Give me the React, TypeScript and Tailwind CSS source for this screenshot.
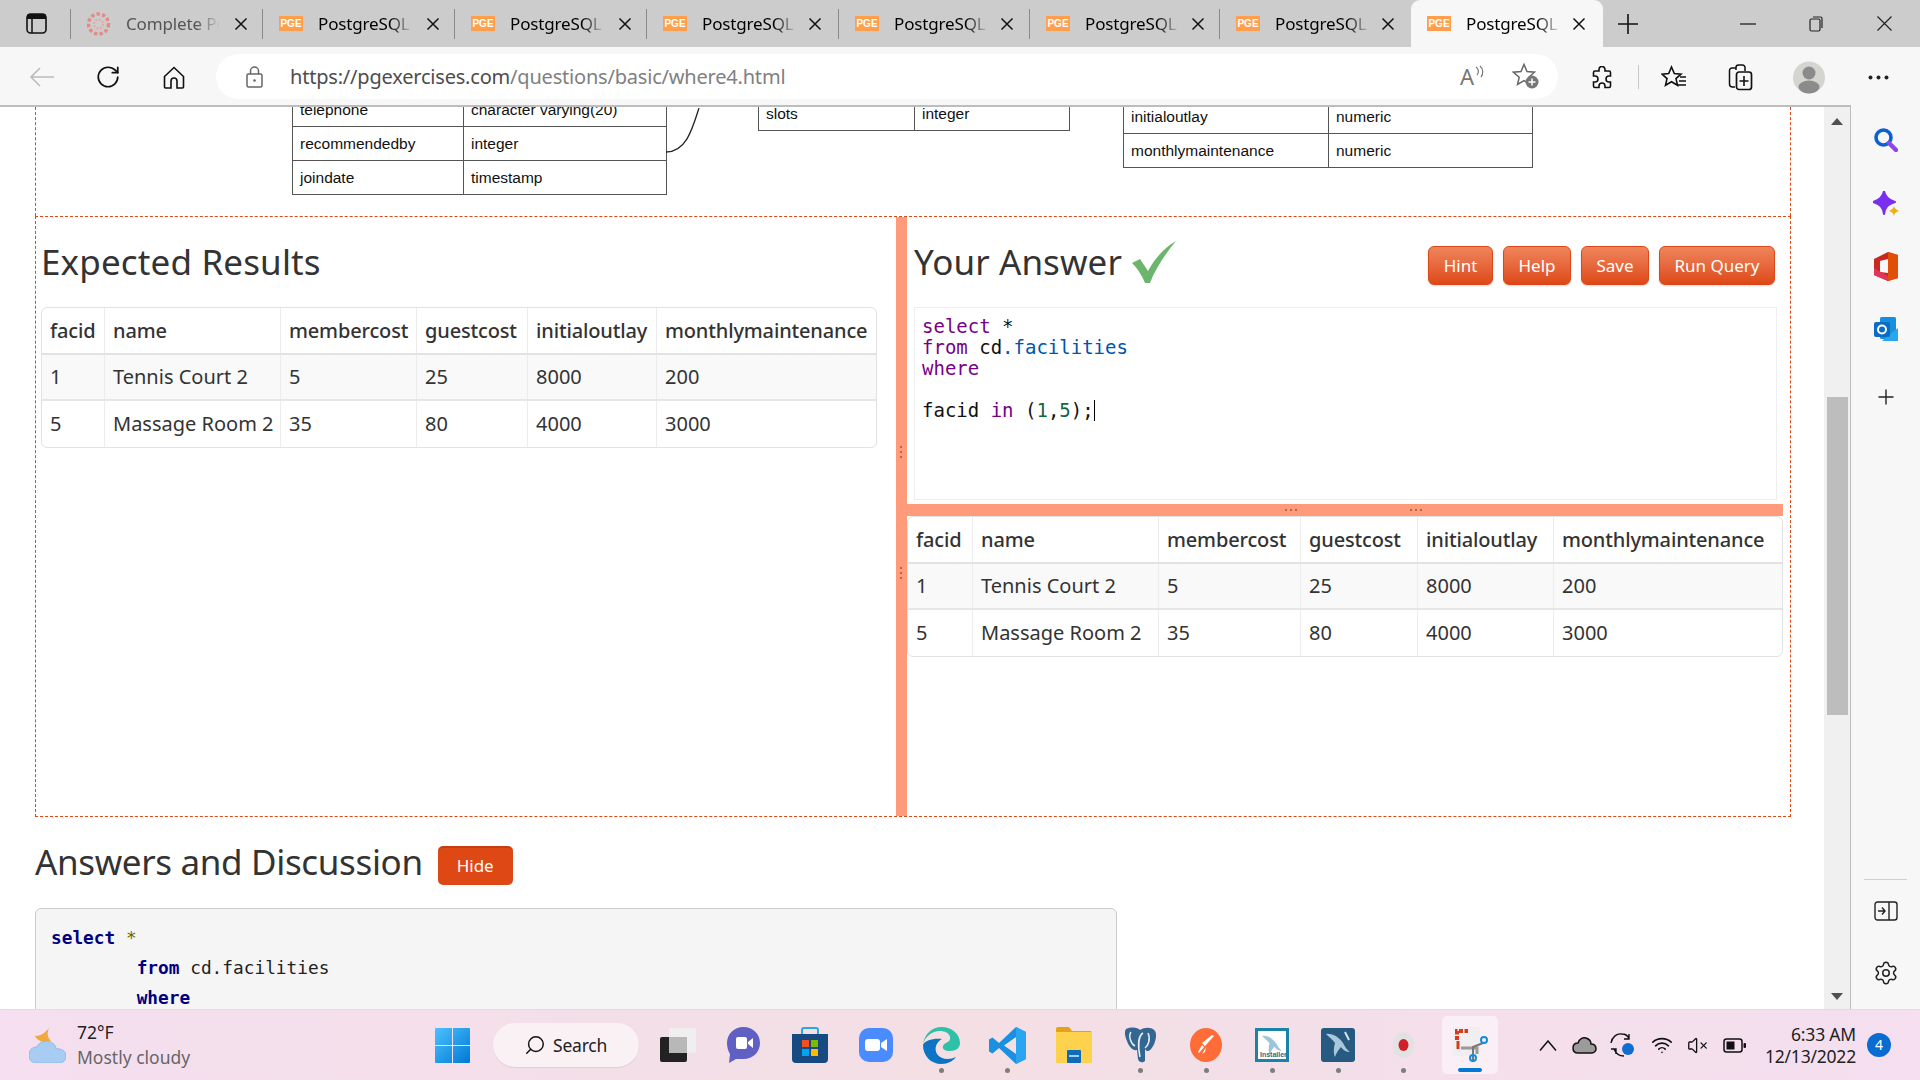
import React from "react";
import { RotateCw, Plus, Settings, Wifi, VolumeX, Search } from "lucide-react";

const UB = "font-['Noto_Sans','Open_Sans',sans-serif]";

function CloseX() {
  return (
    <svg width="14" height="14" viewBox="0 0 14 14" className="shrink-0">
      <path d="M1.5 1.5 12.5 12.5M12.5 1.5 1.5 12.5" stroke="#111" strokeWidth="1.5" fill="none" />
    </svg>
  );
}

function Pge() {
  return (
    <span className="w-[24px] h-[15px] shrink-0 bg-[#ff9f4d] text-white text-[10px] leading-[15px] font-bold text-center font-['Liberation_Sans',sans-serif]">
      PGE
    </span>
  );
}

function Tab({ w, active, divider, closeMl }: { w: string; active?: boolean; divider?: boolean; closeMl: string }) {
  return (
    <div className={`${w} h-full flex items-center pl-[16px] shrink-0 ${active ? "bg-[#f7f7f7] rounded-t-[9px]" : ""}`}>
      <Pge />
      <span className="ml-[15px] w-[92px] overflow-hidden whitespace-nowrap text-[17px] text-black font-['Noto_Sans',sans-serif] tracking-[-0.15px] [mask-image:linear-gradient(90deg,#000_78%,rgba(0,0,0,0.2)_98%)]">
        PostgreSQL
      </span>
      <span className={closeMl}><CloseX /></span>
      {divider ? <span className="ml-auto w-px h-[30px] bg-[#8a8a8a]" /> : null}
    </div>
  );
}

function TabStrip() {
  return (
    <div className="h-[47px] bg-[#cccccc] flex items-center relative shrink-0">
      <div className="w-[70px] h-full flex items-center pl-[26px]">
        <svg width="21" height="21" viewBox="0 0 21 21">
          <rect x="1" y="1" width="19" height="19" rx="3.5" fill="none" stroke="#111" strokeWidth="1.6" />
          <path d="M1 2.5 A1.5 1.5 0 0 1 2.5 1H18.5A1.5 1.5 0 0 1 20 2.5V6H1Z" fill="#111" />
          <path d="M6 6V20" stroke="#111" strokeWidth="1.5" />
        </svg>
      </div>
      <span className="w-px h-[30px] bg-[#8a8a8a]" />
      <div className="w-[192px] h-full flex items-center pl-[15px] shrink-0">
        <svg width="25" height="24" viewBox="0 0 25 24" className="shrink-0">
          <g fill="none" stroke="#e48a86" strokeWidth="3.4" strokeDasharray="3.4 2.2">
            <circle cx="12.5" cy="12" r="10" />
          </g>
          <circle cx="12.5" cy="12" r="4.5" fill="none" stroke="#e9a5a0" strokeWidth="2" strokeDasharray="2 1.5" />
        </svg>
        <span className="ml-[15px] w-[94px] overflow-hidden whitespace-nowrap text-[17px] text-[#555] font-['Noto_Sans',sans-serif] tracking-[-0.15px] [mask-image:linear-gradient(90deg,#000_75%,transparent_100%)]">
          Complete Postgre
        </span>
        <span className="ml-[14px]"><CloseX /></span>
        <span className="ml-auto w-px h-[30px] bg-[#8a8a8a]" />
      </div>
      <Tab w="w-[192px]" closeMl="ml-[16px]" divider />
      <Tab w="w-[192px]" closeMl="ml-[16px]" divider />
      <Tab w="w-[192px]" closeMl="ml-[14px]" divider />
      <Tab w="w-[191px]" closeMl="ml-[14px]" divider />
      <Tab w="w-[190px]" closeMl="ml-[14px]" divider />
      <Tab w="w-[191px]" closeMl="ml-[14px]" />
      <Tab w="w-[192px]" closeMl="ml-[14px]" active />
      <svg width="20" height="20" viewBox="0 0 20 20" className="ml-[15px] shrink-0">
        <path d="M10 0V20M0 10H20" stroke="#111" strokeWidth="1.6" />
      </svg>
      <svg width="16" height="2" viewBox="0 0 16 2" className="ml-[102px] shrink-0">
        <path d="M0 1H16" stroke="#222" strokeWidth="1.3" />
      </svg>
      <svg width="14" height="16" viewBox="0 0 14 16" className="ml-[53px] shrink-0">
        <rect x="1" y="3" width="10" height="12" rx="1.5" fill="none" stroke="#222" strokeWidth="1.2" />
        <path d="M4 1H11.5A1.5 1.5 0 0 1 13 2.5V12" fill="none" stroke="#222" strokeWidth="1.2" />
      </svg>
      <svg width="15" height="15" viewBox="0 0 15 15" className="ml-[54px] shrink-0">
        <path d="M.5.5 14.5 14.5M14.5.5.5 14.5" stroke="#222" strokeWidth="1.2" />
      </svg>
    </div>
  );
}

function Toolbar() {
  return (
    <div className="h-[58px] bg-[#f7f7f7] flex items-center shrink-0">
      <svg width="26" height="22" viewBox="0 0 26 22" className="ml-[29px] mt-[2px] shrink-0">
        <path d="M25 11H2M11 2 2 11l9 9" fill="none" stroke="#bcbcbc" strokeWidth="1.6" />
      </svg>
      <RotateCw size={26} strokeWidth={1.6} className="ml-[40px] mt-[2px] shrink-0 text-[#111]" />
      <svg width="22" height="23" viewBox="0 0 22 23" className="ml-[42px] mt-[2px] shrink-0">
        <path d="M1.5 10.5 11 1.5l9.5 9V21a1 1 0 0 1-1 1H14v-7a3 3 0 0 0-6 0v7H2.5a1 1 0 0 1-1-1Z" fill="none" stroke="#111" strokeWidth="1.6" />
      </svg>
      <div className="ml-[31px] w-[1342px] h-[45px] bg-white rounded-full flex items-center shrink-0">
        <svg width="17" height="22" viewBox="0 0 17 22" className="ml-[30px] mt-[1px] shrink-0">
          <rect x="1" y="8" width="15" height="13" rx="1.5" fill="none" stroke="#666" strokeWidth="1.5" />
          <path d="M4.5 8V5a4 4 0 0 1 8 0v3" fill="none" stroke="#666" strokeWidth="1.5" />
          <circle cx="8.5" cy="14.5" r="1.3" fill="#666" />
        </svg>
        <span className="ml-[27px] mt-[1px] text-[20px] font-['Noto_Sans',sans-serif] tracking-[-0.2px] whitespace-nowrap">
          <span className="text-[#4d4d4d]">https://pgexercises.com</span>
          <span className="text-[#808080]">/questions/basic/where4.html</span>
        </span>
        <span className="ml-auto relative w-[25px] h-[22px] shrink-0">
          <span className="absolute left-0 bottom-0 text-[22px] leading-[22px] text-[#777] font-['Noto_Sans',sans-serif]">A</span>
          <svg width="10" height="14" viewBox="0 0 10 14" className="absolute right-0 top-0">
            <path d="M1 2c3 2 3 6 1 8M5 1c3.500 3 3.500 8 1 11" fill="none" stroke="#777" strokeWidth="1.2" />
          </svg>
        </span>
        <svg width="28" height="28" viewBox="0 0 28 28" className="ml-[27px] mr-[18px] shrink-0">
          <path d="M12 2.500 15 9.500l7.500.7-5.700 5 1.700 7.300L12 18.700 5.500 22.500 7.200 15.200 1.500 10.200 9 9.500Z" fill="none" stroke="#666" strokeWidth="1.5" />
          <circle cx="20" cy="20" r="6.500" fill="#777" />
          <path d="M20 16.500v7M16.500 20h7" stroke="#fff" strokeWidth="1.5" />
        </svg>
      </div>
      <svg width="22" height="23" viewBox="0 0 22 23" className="ml-[33px] mt-[2px] shrink-0">
        <path d="M8 3.500a3 3 0 0 1 6 0V5h4a1.500 1.500 0 0 1 1.500 1.500V10h-1.500a3 3 0 0 0 0 6h1.500v4a1.500 1.500 0 0 1-1.500 1.500H14V20a3 3 0 0 0-6 0v1.500H4A1.500 1.500 0 0 1 2.500 20V16H4a3 3 0 0 0 0-6H2.500V6.500A1.500 1.500 0 0 1 4 5h4Z" fill="none" stroke="#111" strokeWidth="1.6" />
      </svg>
      <span className="ml-[25px] mt-[2px] w-px h-[24px] bg-[#c8c8c8] shrink-0" />
      <svg width="26" height="24" viewBox="0 0 26 24" className="ml-[22px] mt-[2px] shrink-0">
        <path d="M10.500 2 13.300 8.500l6.700.6-5 4.500 1.500 6.700-6-3.600-6 3.600 1.500-6.700-5-4.500 6.700-.6Z" fill="none" stroke="#111" strokeWidth="1.6" />
        <path d="M19 12h6M18 16h7M17 20h8" stroke="#111" strokeWidth="1.5" />
      </svg>
      <svg width="25" height="27" viewBox="0 0 25 27" className="ml-[41px] mt-[2px] shrink-0">
        <path d="M8 6V3.500A2.500 2.500 0 0 1 10.500 1h4A2.500 2.500 0 0 1 17 3.500V7M7 23H4.500A3 3 0 0 1 1.500 20V6.500A2.500 2.500 0 0 1 4 4h4" fill="none" stroke="#111" strokeWidth="1.5" />
        <rect x="8.500" y="8" width="15" height="17.500" rx="2.500" fill="none" stroke="#111" strokeWidth="1.7" />
        <path d="M16 12v10M11.500 17h9" stroke="#111" strokeWidth="1.6" />
      </svg>
      <svg width="32" height="33" viewBox="0 0 32 33" className="ml-[40px] mt-[2px] shrink-0">
        <circle cx="16" cy="16.500" r="16" fill="#d4d4d0" />
        <circle cx="16" cy="12" r="6.500" fill="#8b8b8b" />
        <ellipse cx="16" cy="26" rx="10.500" ry="6.500" fill="#8b8b8b" />
      </svg>
      <svg width="21" height="5" viewBox="0 0 21 5" className="ml-[43px] mt-[2px] shrink-0">
        <circle cx="2.500" cy="2.500" r="2" fill="#222" />
        <circle cx="10.500" cy="2.500" r="2" fill="#222" />
        <circle cx="18.500" cy="2.500" r="2" fill="#222" />
      </svg>
    </div>
  );
}

function DiagramTable({ pos, col, rows }: { pos: string; col: string; rows: string[][] }) {
  return (
    <div className={`absolute ${pos} border-x border-[#555] font-['Liberation_Sans',sans-serif] text-[15.5px] text-[#111]`}>
      {rows.map((r, i) => (
        <div key={i} className="flex h-[34px] border-b border-[#555] box-border">
          <div className={`${col} h-full border-r border-[#555] pl-[7px] flex items-center shrink-0`}>{r[0]}</div>
          <div className="flex-1 pl-[7px] flex items-center">{r[1]}</div>
        </div>
      ))}
    </div>
  );
}

function Schema() {
  return (
    <div className="h-[109px] ml-[35px] w-[1756px] border-x border-dashed border-[#dd4814] relative overflow-hidden shrink-0">
      <DiagramTable
        pos="left-[256px] top-[-14px] w-[375px]"
        col="w-[171px]"
        rows={[
          ["telephone", "character varying(20)"],
          ["recommendedby", "integer"],
          ["joindate", "timestamp"],
        ]}
      />
      <svg width="40" height="50" viewBox="0 0 40 50" className="absolute left-[630px] top-[1px]">
        <path d="M0 44C20 44 26 22 33 0" fill="none" stroke="#222" strokeWidth="1.3" />
      </svg>
      <DiagramTable pos="left-[722px] top-[-10px] w-[312px]" col="w-[156px]" rows={[["slots", "integer"]]} />
      <DiagramTable
        pos="left-[1087px] top-[-7px] w-[410px]"
        col="w-[205px]"
        rows={[
          ["initialoutlay", "numeric"],
          ["monthlymaintenance", "numeric"],
        ]}
      />
    </div>
  );
}

const HEAD = ["facid", "name", "membercost", "guestcost", "initialoutlay", "monthlymaintenance"];
const ROWS = [
  ["1", "Tennis Court 2", "5", "25", "8000", "200"],
  ["5", "Massage Room 2", "35", "80", "4000", "3000"],
];

function DataTable({ cols, className }: { cols: string[]; className: string }) {
  return (
    <div className={`${className} border border-[#e2e2e2] rounded-[6px] overflow-hidden ${UB} text-[20px] text-[#333] shrink-0`}>
      <div className="flex h-[47px] border-b-2 border-[#e2e2e2] font-medium">
        {HEAD.map((h, i) => (
          <div key={h} className={`${cols[i]} h-full pl-[8px] flex items-center shrink-0 ${i < 5 ? "border-r border-[#ececec]" : ""} whitespace-nowrap tracking-[-0.15px]`}>
            {h}
          </div>
        ))}
      </div>
      {ROWS.map((r, ri) => (
        <div key={ri} className={`flex h-[46px] ${ri === 0 ? "bg-[#f9f9f9] border-b-2 border-[#e6e6e6]" : ""}`}>
          {r.map((c, i) => (
            <div key={i} className={`${cols[i]} h-full pl-[8px] flex items-center shrink-0 ${i < 5 ? "border-r border-[#ececec]" : ""} whitespace-nowrap`}>
              {c}
            </div>
          ))}
        </div>
      ))}
    </div>
  );
}

function Btn({ w, children }: { w: string; children: React.ReactNode }) {
  return (
    <button className={`${w} h-[39px] rounded-[6px] bg-linear-to-b from-[#f0845a] to-[#dd4814] border border-[#d9491a] text-white text-[17px] ${UB} shadow-[0_1px_2px_rgba(0,0,0,0.15)]`}>
      {children}
    </button>
  );
}

function GripV() {
  return (
    <span className="flex flex-col gap-[3px]">
      <span className="w-[2px] h-[2px] bg-[#b06a50]" />
      <span className="w-[2px] h-[2px] bg-[#b06a50]" />
      <span className="w-[2px] h-[2px] bg-[#b06a50]" />
    </span>
  );
}

function GripH() {
  return (
    <span className="flex gap-[3px]">
      <span className="w-[2px] h-[2px] bg-[#b06a50]" />
      <span className="w-[2px] h-[2px] bg-[#b06a50]" />
      <span className="w-[2px] h-[2px] bg-[#b06a50]" />
    </span>
  );
}

function Workbench() {
  const mono = "font-['DejaVu_Sans_Mono',monospace]";
  return (
    <div className="ml-[35px] w-[1756px] h-[601px] border-x border-y border-dashed border-[#dd4814] flex shrink-0">
      <div className="w-[860px] pl-[5px] shrink-0">
        <div className="h-[90px] flex items-center">
          <h2 className={`${UB} text-[35px] text-[#333] tracking-[0.15px] whitespace-nowrap`}>Expected Results</h2>
        </div>
        <DataTable className="w-[836px]" cols={["w-[63px]", "w-[176px]", "w-[136px]", "w-[111px]", "w-[129px]", "w-[219px]"]} />
      </div>
      <div className="w-[11px] bg-[#ff9a7b] shrink-0 relative">
        <span className="absolute left-[4px] top-[229px]"><GripV /></span>
        <span className="absolute left-[4px] top-[350px]"><GripV /></span>
      </div>
      <div className="flex-1 flex flex-col">
        <div className="h-[90px] flex items-center pl-[7px] pr-[15px] shrink-0">
          <h2 className={`${UB} text-[35px] text-[#333] tracking-[0.1px] whitespace-nowrap`}>Your Answer</h2>
          <svg width="45" height="42" viewBox="0 0 45 42" className="ml-[10px] shrink-0">
            <path d="M0 22 8 18 16 30C23 17 33 6 44 0 35 11 24 26 18 42H13C10 34 5 27 0 22Z" fill="#6cb56c" />
          </svg>
          <div className="ml-auto mt-[7px] flex gap-[10px]">
            <Btn w="w-[65px]">Hint</Btn>
            <Btn w="w-[68px]">Help</Btn>
            <Btn w="w-[68px]">Save</Btn>
            <Btn w="w-[116px]">Run Query</Btn>
          </div>
        </div>
        <div className={`ml-[7px] w-[863px] h-[193px] border border-[#eeeeee] pl-[7px] pt-[8px] ${mono} text-[19px] leading-[21px] whitespace-pre shrink-0 text-[#111]`}>
          <div><span className="text-[#708]">select</span> <span>*</span></div>
          <div><span className="text-[#708]">from</span> cd<span className="text-[#05a]">.facilities</span></div>
          <div className="text-[#708]">where</div>
          <div>{" "}</div>
          <div>
            facid <span className="text-[#708]">in</span> (<span className="text-[#164]">1</span>,<span className="text-[#164]">5</span>);<span className="inline-block align-top w-px h-[21px] bg-black" />
          </div>
        </div>
        <div className="mt-[4px] w-[876px] h-[12px] bg-[#ff9a7b] shrink-0 flex items-center">
          <span className="ml-[378px]"><GripH /></span>
          <span className="ml-[113px]"><GripH /></span>
        </div>
        <DataTable className="w-[876px]" cols={["w-[65px]", "w-[186px]", "w-[142px]", "w-[117px]", "w-[136px]", "w-[228px]"]} />
      </div>
    </div>
  );
}

function Answers() {
  return (
    <div className="ml-[35px] flex flex-col shrink-0">
      <div className="h-[91px] flex items-center">
        <h2 className={`${UB} text-[35px] text-[#333] tracking-[-0.35px] whitespace-nowrap`}>Answers and Discussion</h2>
        <button className={`ml-[15px] mt-[5px] w-[75px] h-[39px] rounded-[5px] bg-[#dd4814] border-t-2 border-[#c23f12] text-white text-[17px] ${UB}`}>Hide</button>
      </div>
      <pre className="w-[1082px] h-[200px] bg-[#f5f5f5] border border-[#cccccc] rounded-[6px] pl-[15px] pt-[14px] font-['DejaVu_Sans_Mono',monospace] text-[17.8px] leading-[30px] text-[#222]">
        <div><span className="text-[#000080] font-bold">select</span> <span className="text-[#666600]">*</span></div>
        <div>{"        "}<span className="text-[#000080] font-bold">from</span> cd.facilities</div>
        <div>{"        "}<span className="text-[#000080] font-bold">where</span></div>
      </pre>
    </div>
  );
}

function Scrollbar() {
  return (
    <div className="w-[27px] shrink-0 bg-[#f0f0f0] border-r border-[#bdbdbd] flex flex-col items-center">
      <svg width="12" height="7" viewBox="0 0 12 7" className="mt-[11px] shrink-0">
        <path d="M0 7 6 0l6 7Z" fill="#505050" />
      </svg>
      <div className="mt-[272px] w-[21px] h-[318px] bg-[#bdbdbd] shrink-0" />
      <svg width="12" height="7" viewBox="0 0 12 7" className="mt-[278px] shrink-0">
        <path d="M0 0 6 7l6-7Z" fill="#505050" />
      </svg>
    </div>
  );
}

function Sidebar() {
  return (
    <div className="w-[69px] bg-[#f7f7f7] flex flex-col items-center shrink-0">
      <svg width="24" height="24" viewBox="0 0 24 24" className="mt-[23px] shrink-0">
        <circle cx="9.500" cy="9.500" r="7.500" fill="none" stroke="#0f5fd0" strokeWidth="3.600" />
        <path d="M15 15 22 22" stroke="#8d46e8" strokeWidth="4.500" strokeLinecap="round" />
      </svg>
      <svg width="26" height="26" viewBox="0 0 26 26" className="mt-[39px] shrink-0">
        <path d="M11 0C12 6 15 9 22 11 15 13 12 16 11 23 10 16 7 13 0 11 7 9 10 6 11 0Z" fill="#7a2ff0" stroke="#7a2ff0" strokeWidth="2" strokeLinejoin="round" />
        <path d="M21 15C21.300 17 22.500 18 26 20 22.500 21 21.300 22.500 21 26 20.700 22.500 19.500 21 16 20 19.500 18 20.700 17 21 15Z" fill="#f0b010" />
      </svg>
      <svg width="24" height="29" viewBox="0 0 24 29" className="mt-[35px] shrink-0">
        <path d="M0 7 14 0 24 3V26L14 29 0 23Z" fill="#c9281f" />
        <path d="M14 0 24 3V26L14 29Z" fill="#e04e08" />
        <path d="M6 9 14 7V21L6 20Z" fill="#f7f7f7" />
        <path d="M0 16V23L14 29V24Z" fill="#e0345a" />
      </svg>
      <svg width="24" height="24" viewBox="0 0 24 24" className="mt-[36px] shrink-0">
        <rect x="6" y="0" width="16" height="22" rx="1.500" fill="#1490df" />
        <path d="M8 24 24 24V11L16 17Z" fill="#28a8ea" />
        <rect x="0" y="5" width="16" height="15" rx="2" fill="#0a6cc4" />
        <circle cx="8" cy="12.500" r="4" fill="none" stroke="#fff" strokeWidth="2" />
      </svg>
      <Plus size={24} strokeWidth={1.4} className="mt-[44px] shrink-0 text-[#222]" />
      <div className="mt-[470px] w-[43px] h-px bg-[#cfcfcf] shrink-0" />
      <svg width="24" height="20" viewBox="0 0 24 20" className="mt-[21px] shrink-0">
        <rect x="1" y="1" width="22" height="18" rx="2.500" fill="none" stroke="#222" strokeWidth="1.400" />
        <path d="M15 1V19M4 10h7M8 6.500 11 10l-3 3.500" fill="none" stroke="#222" strokeWidth="1.400" />
      </svg>
      <Settings size={26} strokeWidth={1.4} className="mt-[39px] shrink-0 text-[#222]" />
    </div>
  );
}

function TItem({ ml, w, dot, children }: { ml: string; w: string; dot?: boolean; children: React.ReactNode }) {
  return (
    <div className={`${ml} ${w} h-full relative flex items-center justify-center shrink-0`}>
      {children}
      {dot ? <span className="absolute bottom-[7px] left-1/2 -ml-[2.5px] w-[5px] h-[5px] rounded-full bg-[#7d7d7d]" /> : null}
    </div>
  );
}

function Dolphin({ color }: { color: string }) {
  return (
    <path d="M5 6C11 5 18 9 22 15 24 19 26 22 29 24 25 24 22 22 20 19 17 22 15 26 14 29 12 24 13 19 14 15 12 12 8 9 5 6Z" fill={color} />
  );
}

function Taskbar() {
  return (
    <div className="h-[71px] bg-linear-to-r from-[#f5dff0] via-[#f3dfe4] to-[#f5dff0] border-t border-[#ecd7dd] flex items-center shrink-0">
      <TItem ml="ml-[29px]" w="w-[37px]">
        <svg width="37" height="35" viewBox="0 0 37 35">
          <path d="M20 0C16 5 12 8 6 8 8 13 15 15 22 13 18 9 18 5 20 0Z" fill="#f0a93a" />
          <path d="M8 35C3 35 0 32 0 27 0 22 3 19 8 19 10 14 16 12 21 14 25 15 27 18 27 21 32 20 37 23 37 28 37 32 34 35 30 35Z" fill="#a9cdf2" stroke="#8fb9e8" strokeWidth="1" />
        </svg>
      </TItem>
      <div className="ml-[11px] w-[358px] shrink-0 flex flex-col font-['Noto_Sans',sans-serif] text-[17.5px] leading-[25px]">
        <span className="text-[#222]">72°F</span>
        <span className="text-[#666]">Mostly cloudy</span>
      </div>
      <TItem ml="" w="w-[35px]">
        <svg width="35" height="35" viewBox="0 0 35 35">
          <defs>
            <linearGradient id="wg" x1="0" y1="0" x2="1" y2="1">
              <stop offset="0" stopColor="#4cc2ff" />
              <stop offset="1" stopColor="#0078d4" />
            </linearGradient>
          </defs>
          <path d="M0 1A1 1 0 0 1 1 0H17V17H0ZM18 0H34A1 1 0 0 1 35 1V17H18ZM0 18H17V35H1A1 1 0 0 1 0 34ZM18 18H35V34A1 1 0 0 1 34 35H18Z" fill="url(#wg)" />
        </svg>
      </TItem>
      <div className="ml-[23px] w-[146px] h-[44px] rounded-full bg-[#faf1f5] shadow-[0_1px_1px_rgba(0,0,0,0.08)] flex items-center shrink-0">
        <Search size={22} strokeWidth={1.6} className="ml-[31px] -scale-x-100 text-[#111]" />
        <span className="ml-[7px] mt-[1px] text-[17.5px] text-[#222] font-['Noto_Sans',sans-serif] tracking-[-0.2px]">Search</span>
      </div>
      <TItem ml="ml-[21px]" w="w-[36px]">
        <svg width="36" height="34" viewBox="0 0 36 34">
          <rect x="0" y="9" width="27" height="25" rx="2" fill="#222" />
          <rect x="9" y="0" width="27" height="25" rx="2" fill="#f0f0f0" fillOpacity="0.9" />
          <rect x="9" y="9" width="18" height="16" fill="#b8b8b8" />
        </svg>
      </TItem>
      <TItem ml="ml-[31px]" w="w-[33px]">
        <svg width="33" height="36" viewBox="0 0 33 36">
          <path d="M16.500 0C26 0 33 7 33 16S26 32 16.500 32H9L2 36 3 27C1 24 0 20 0 16 0 7 7 0 16.500 0Z" fill="#5f5fc4" />
          <rect x="9" y="10" width="11" height="12" rx="2" fill="#fff" />
          <path d="M21 15 26 11V21L21 17Z" fill="#fff" />
        </svg>
      </TItem>
      <TItem ml="ml-[32px]" w="w-[36px]">
        <svg width="36" height="36" viewBox="0 0 36 36">
          <path d="M10 8V3A2 2 0 0 1 12 1H24A2 2 0 0 1 26 3V8" fill="none" stroke="#2aa8e0" strokeWidth="2" />
          <path d="M0 7H36V32A4 4 0 0 1 32 36H4A4 4 0 0 1 0 32Z" fill="#164a80" />
          <rect x="10" y="13" width="7" height="7" fill="#f25022" />
          <rect x="19" y="13" width="7" height="7" fill="#7fba00" />
          <rect x="10" y="22" width="7" height="7" fill="#00a4ef" />
          <rect x="19" y="22" width="7" height="7" fill="#ffb900" />
        </svg>
      </TItem>
      <TItem ml="ml-[31px]" w="w-[34px]">
        <svg width="34" height="34" viewBox="0 0 34 34">
          <rect width="34" height="34" rx="10" fill="#4a8cff" />
          <rect x="6" y="11" width="15" height="12" rx="3" fill="#fff" />
          <path d="M22 15 28 11V23L22 19Z" fill="#fff" />
        </svg>
      </TItem>
      <TItem ml="ml-[30px]" w="w-[37px]" dot>
        <svg width="37" height="37" viewBox="0 0 37 37">
          <path d="M18.500 0C29 0 37 7 37 16 37 21 33 24 27 24 22 24 19 22 20 19 21 15 28 16 27 10 26 6 22 4 17 4 8 4 1 11 0 18 1 7 9 0 18.500 0Z" fill="#2fc1a8" />
          <path d="M0 18C0 29 8 37 18.500 37 25 37 30 34 33 30 27 33 18 33 14 27 11 22 13 15 19 12 10 11 1 14 0 18Z" fill="#0b74c4" />
        </svg>
      </TItem>
      <TItem ml="ml-[29px]" w="w-[37px]" dot>
        <svg width="37" height="37" viewBox="0 0 37 37">
          <path d="M27 0 10 16 3.500 10.500 0 12.500V24.500L3.500 26.500 10 21 27 37 37 32V5ZM27 10V27L15 18.500Z" fill="#1b8fe0" fillRule="evenodd" />
          <path d="M27 0 37 5V32L27 37V27 10Z" fill="#2aa5f0" />
        </svg>
      </TItem>
      <TItem ml="ml-[30px]" w="w-[36px]">
        <svg width="36" height="36" viewBox="0 0 36 36">
          <path d="M0 2A2 2 0 0 1 2 0H13L16 4H34A2 2 0 0 1 36 6V10H0Z" fill="#e3a21a" />
          <path d="M0 5H36V35A1 1 0 0 1 35 36H1A1 1 0 0 1 0 35Z" fill="#ffd24d" />
          <rect x="11" y="23" width="14" height="13" rx="1" fill="#0f6cbd" />
          <rect x="13" y="28" width="10" height="2" fill="#9fd0f5" />
        </svg>
      </TItem>
      <TItem ml="ml-[31px]" w="w-[34px]" dot>
        <svg width="34" height="36" viewBox="0 0 34 36">
          <path d="M3 2C10-1 15 1 17 3 22 0 29 0 32 4 35 9 31 20 27 23 25 25 23 24 22 22V34C20 36 16 36 15 32L14 23C10 24 6 20 4 14 2 9 1 5 3 2Z" fill="#336791" />
          <path d="M8 5C5 9 8 17 12 19M20 6C15 9 15 20 17 30M25 6C28 12 25 19 22 21" fill="none" stroke="#e8eef4" strokeWidth="1.500" />
        </svg>
      </TItem>
      <TItem ml="ml-[33px]" w="w-[32px]" dot>
        <svg width="32" height="34" viewBox="0 0 32 34">
          <ellipse cx="16" cy="17" rx="16" ry="17" fill="#ff6c37" />
          <path d="M24 8 15 18 12 15 22 7ZM14 19 9 25 8 24 12 17ZM16 19 15 24 12 26Z" fill="#fff" />
        </svg>
      </TItem>
      <TItem ml="ml-[33px]" w="w-[34px]" dot>
        <div className="w-[34px] h-[34px] bg-white border-[3px] border-[#1c83a8] relative overflow-hidden">
          <svg width="28" height="28" viewBox="0 0 34 34" className="absolute left-0 top-0">
            <Dolphin color="#9cc4dc" />
          </svg>
          <span className="absolute left-[2px] bottom-0 text-[7px] leading-[8px] font-bold text-[#1c6f90] font-['Liberation_Sans',sans-serif]">Installer</span>
        </div>
      </TItem>
      <TItem ml="ml-[32px]" w="w-[34px]" dot>
        <svg width="34" height="34" viewBox="0 0 34 34">
          <rect width="34" height="34" rx="3" fill="#265a80" />
          <Dolphin color="#a9c8dc" />
          <path d="M24 4 28 12" stroke="#d5e4ee" strokeWidth="2" />
        </svg>
      </TItem>
      <TItem ml="ml-[38px]" w="w-[21px]" dot>
        <svg width="21" height="26" viewBox="0 0 21 26">
          <ellipse cx="10.500" cy="13" rx="10.500" ry="13" fill="#e2e2e2" />
          <ellipse cx="10.500" cy="13" rx="5" ry="6" fill="#d0202a" />
        </svg>
      </TItem>
      <div className="ml-[28px] w-[56px] h-[58px] bg-[#faeff4] rounded-[5px] relative flex items-center justify-center shrink-0">
        <svg width="35" height="35" viewBox="0 0 35 35" className="-mt-[2px]">
          <rect x="0" y="0" width="27" height="29" fill="#f0eef0" />
          <path d="M4 13V4H15" fill="none" stroke="#d83b1a" strokeWidth="4" strokeDasharray="4 1.500" />
          <path d="M5 14V22" stroke="#d83b1a" strokeWidth="3" />
          <path d="M8 21H24V27" fill="none" stroke="#9a9a9a" strokeWidth="3" />
          <path d="M20 35 20 20 30 16" fill="none" stroke="#777" strokeWidth="2" />
          <circle cx="31" cy="13" r="3" fill="none" stroke="#0f8de0" strokeWidth="2" />
          <circle cx="20" cy="31" r="3" fill="none" stroke="#0f8de0" strokeWidth="2" />
        </svg>
        <span className="absolute bottom-[2px] left-[16px] w-[24px] h-[4px] rounded-full bg-[#0078d4]" />
      </div>
      <TItem ml="ml-[41px]" w="w-[18px]">
        <svg width="18" height="11" viewBox="0 0 18 11">
          <path d="M1 10.500 9 1l8 9.500" fill="none" stroke="#111" strokeWidth="1.500" />
        </svg>
      </TItem>
      <TItem ml="ml-[15px]" w="w-[25px]">
        <svg width="25" height="18" viewBox="0 0 25 18">
          <path d="M6 17C3 17 1 15 1 12 1 9 3 7 6 7 7 3 11 1 14 2 17 3 19 5 19 8 22 8 24 10 24 13 24 15 22 17 20 17Z" fill="#9b9b9b" stroke="#111" strokeWidth="1.500" />
        </svg>
      </TItem>
      <TItem ml="ml-[12px]" w="w-[25px]">
        <svg width="25" height="26" viewBox="0 0 25 26">
          <path d="M2 11C3 5 8 1 13 2 16 2 19 4 20 7M20 2V7H15M2 17H7V22M5 17C7 22 11 24 15 24" fill="none" stroke="#111" strokeWidth="1.400" />
          <circle cx="19" cy="17" r="6" fill="#0f6cd0" />
        </svg>
      </TItem>
      <TItem ml="ml-[17px]" w="w-[22px]">
        <Wifi size={24} strokeWidth={1.8} className="text-[#111]" />
      </TItem>
      <TItem ml="ml-[14px]" w="w-[21px]">
        <VolumeX size={23} strokeWidth={1.5} className="text-[#111]" />
      </TItem>
      <TItem ml="ml-[15px]" w="w-[23px]">
        <svg width="23" height="15" viewBox="0 0 23 15">
          <rect x="1" y="1" width="18" height="13" rx="2.500" fill="none" stroke="#111" strokeWidth="1.500" />
          <rect x="3.500" y="3.500" width="8" height="8" fill="#111" />
          <rect x="20.500" y="5" width="2.500" height="5" rx="1" fill="#111" />
        </svg>
      </TItem>
      <div className="w-[110px] shrink-0 flex flex-col items-end font-['Noto_Sans',sans-serif] text-[17.5px] leading-[22px] tracking-[-0.2px] text-[#222]">
        <span>6:33 AM</span>
        <span>12/13/2022</span>
      </div>
      <div className="ml-[11px] w-[24px] h-[24px] rounded-full bg-[#0a6cd0] text-white text-[14px] leading-[24px] text-center font-['Noto_Sans',sans-serif] shrink-0">4</div>
    </div>
  );
}

export default function App() {
  return (
    <div className="w-[1920px] h-[1080px] overflow-hidden flex flex-col bg-white">
      <TabStrip />
      <Toolbar />
      <div className="flex-1 min-h-0 flex">
        <div className="flex-1 min-w-0 flex border-t-2 border-[#bdbdbd]">
          <div className="flex-1 min-w-0 flex flex-col overflow-hidden bg-white">
            <Schema />
            <Workbench />
            <Answers />
          </div>
          <Scrollbar />
        </div>
        <Sidebar />
      </div>
      <Taskbar />
    </div>
  );
}
